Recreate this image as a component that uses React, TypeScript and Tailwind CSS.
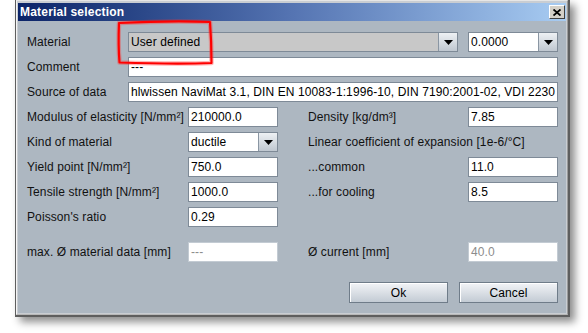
import React from "react";

const font = { fontFamily: '"Liberation Sans", Arial, sans-serif' };

function Arrow() {
  return (
    <div className="w-[19px] h-full flex items-center justify-center border-l border-[#8a96a3] bg-gradient-to-b from-[#eef1f4] to-[#bfc7d0]">
      <svg width="9" height="5" viewBox="0 0 9 5">
        <path d="M0 0 H9 L4.5 5 Z" fill="#000" />
      </svg>
    </div>
  );
}

function Field({ value, w, disabled }: { value: string; w: string; disabled?: boolean }) {
  return (
    <div
      className={`${w} h-[20px] bg-white border ${disabled ? "border-[#c3cbd3] text-[#8c8c8c]" : "border-[#7e8a97] text-black"} pl-[2px] text-[12px] leading-[18px] tracking-[0.1px] whitespace-nowrap overflow-hidden`}
    >
      {value}
    </div>
  );
}

function Combo({ value, w, gray }: { value: string; w: string; gray?: boolean }) {
  return (
    <div className={`${w} h-[20px] flex border border-[#7e8a97] ${gray ? "bg-[#c8c8c8]" : "bg-white"}`}>
      <div className="flex-1 pl-[2px] text-[12px] leading-[18px] tracking-[0.1px] text-black whitespace-nowrap overflow-hidden">{value}</div>
      <Arrow />
    </div>
  );
}

function Label({ text, w }: { text: string; w: string }) {
  return <div className={`${w} text-[12px] leading-[20px] tracking-[0.1px] text-[#111] whitespace-nowrap`}>{text}</div>;
}

function Btn({ text }: { text: string }) {
  return (
    <div className="w-[99px] h-[21px] border border-[#6f7c89] bg-gradient-to-b from-[#f2f4f7] to-[#c3cbd4] flex items-center justify-center text-[12px] tracking-[0.1px] text-black shadow-[inset_1px_1px_0_#ffffff]">
      {text}
    </div>
  );
}

export default function App() {
  return (
    <div className="relative w-[588px] h-[333px] bg-white overflow-hidden" style={font}>
      <div className="ml-[15px] w-[555px] h-[317px] border-l border-r-2 border-b-2 border-[#5e5e5e] shadow-[5px_5px_8px_rgba(0,0,0,0.45)]">
        <div className="w-full h-full border border-t-[#e6e6e6] border-l-[#f4f4f4] border-r-[#9a9a9a] border-b-[#b8b8b8] bg-[#c9cdd2] pt-[2px] px-[1px] pb-[1px] flex flex-col">
          <div className="h-[18px] flex items-center justify-between bg-gradient-to-r from-[#0c2468] via-[#5574b2] to-[#a8ccf2] pl-[2px] pr-[1px]">
            <span className="text-white font-bold text-[12px] leading-[18px] tracking-[0.2px]">Material selection</span>
            <div className="w-[16px] h-[14px] bg-[#d4d0c8] border border-t-white border-l-white border-r-[#404040] border-b-[#404040] flex items-center justify-center">
              <svg width="8" height="7" viewBox="0 0 8 7">
                <path d="M0.5 0.5 L7.5 6.5 M7.5 0.5 L0.5 6.5" stroke="#000" strokeWidth="1.8" />
              </svg>
            </div>
          </div>
          <div className="flex-1 bg-[#adb7c1] pl-[9px] pt-[11px] flex flex-col gap-[5px]">
            <div className="flex w-[531px] h-[20px]">
              <Label text="Material" w="w-[101px]" />
              <Combo value="User defined" w="w-[330px]" gray />
              <div className="w-[10px]" />
              <Combo value="0.0000" w="w-[90px]" />
            </div>
            <div className="flex w-[531px] h-[20px]">
              <Label text="Comment" w="w-[101px]" />
              <Field value="---" w="w-[430px]" />
            </div>
            <div className="flex w-[531px] h-[20px]">
              <Label text="Source of data" w="w-[101px]" />
              <Field value="hlwissen NaviMat 3.1, DIN EN 10083-1:1996-10, DIN 7190:2001-02, VDI 2230" w="w-[430px]" />
            </div>
            <div className="flex w-[531px] h-[20px]">
              <Label text="Modulus of elasticity [N/mm²]" w="w-[161px]" />
              <Field value="210000.0" w="w-[90px]" />
              <div className="w-[30px]" />
              <Label text="Density [kg/dm³]" w="w-[160px]" />
              <Field value="7.85" w="w-[90px]" />
            </div>
            <div className="flex w-[531px] h-[20px]">
              <Label text="Kind of material" w="w-[161px]" />
              <Combo value="ductile" w="w-[90px]" />
              <div className="w-[30px]" />
              <Label text="Linear coefficient of expansion [1e-6/°C]" w="w-[250px]" />
            </div>
            <div className="flex w-[531px] h-[20px]">
              <Label text="Yield point [N/mm²]" w="w-[161px]" />
              <Field value="750.0" w="w-[90px]" />
              <div className="w-[30px]" />
              <Label text="...common" w="w-[160px]" />
              <Field value="11.0" w="w-[90px]" />
            </div>
            <div className="flex w-[531px] h-[20px]">
              <Label text="Tensile strength [N/mm²]" w="w-[161px]" />
              <Field value="1000.0" w="w-[90px]" />
              <div className="w-[30px]" />
              <Label text="...for cooling" w="w-[160px]" />
              <Field value="8.5" w="w-[90px]" />
            </div>
            <div className="flex w-[531px] h-[20px]">
              <Label text="Poisson's ratio" w="w-[161px]" />
              <Field value="0.29" w="w-[90px]" />
            </div>
            <div className="flex w-[531px] h-[20px] mt-[10px]">
              <Label text="max. Ø material data [mm]" w="w-[161px]" />
              <Field value="---" w="w-[90px]" disabled />
              <div className="w-[30px]" />
              <Label text="Ø current [mm]" w="w-[160px]" />
              <Field value="40.0" w="w-[90px]" disabled />
            </div>
            <div className="flex w-[531px] justify-end gap-[11px] mt-[15px]">
              <Btn text="Ok" />
              <Btn text="Cancel" />
            </div>
          </div>
        </div>
      </div>
      <svg className="absolute left-0 top-0 pointer-events-none" width="588" height="333">
        <path
          d="M119 23 C150 21.5 185 21 210 22 C211 35 211.5 50 211.5 63 C185 64 150 63.5 119.5 62.5 C118.5 50 118.5 35 119 23 Z"
          fill="none"
          stroke="#ff3030"
          strokeWidth="4.5"
          strokeOpacity="0.35"
          strokeLinejoin="round"
        />
        <path
          d="M119 23 C150 21.5 185 21 210 22 C211 35 211.5 50 211.5 63 C185 64 150 63.5 119.5 62.5 C118.5 50 118.5 35 119 23 Z"
          fill="none"
          stroke="#ff0000"
          strokeWidth="2.2"
          strokeLinejoin="round"
        />
      </svg>
    </div>
  );
}
